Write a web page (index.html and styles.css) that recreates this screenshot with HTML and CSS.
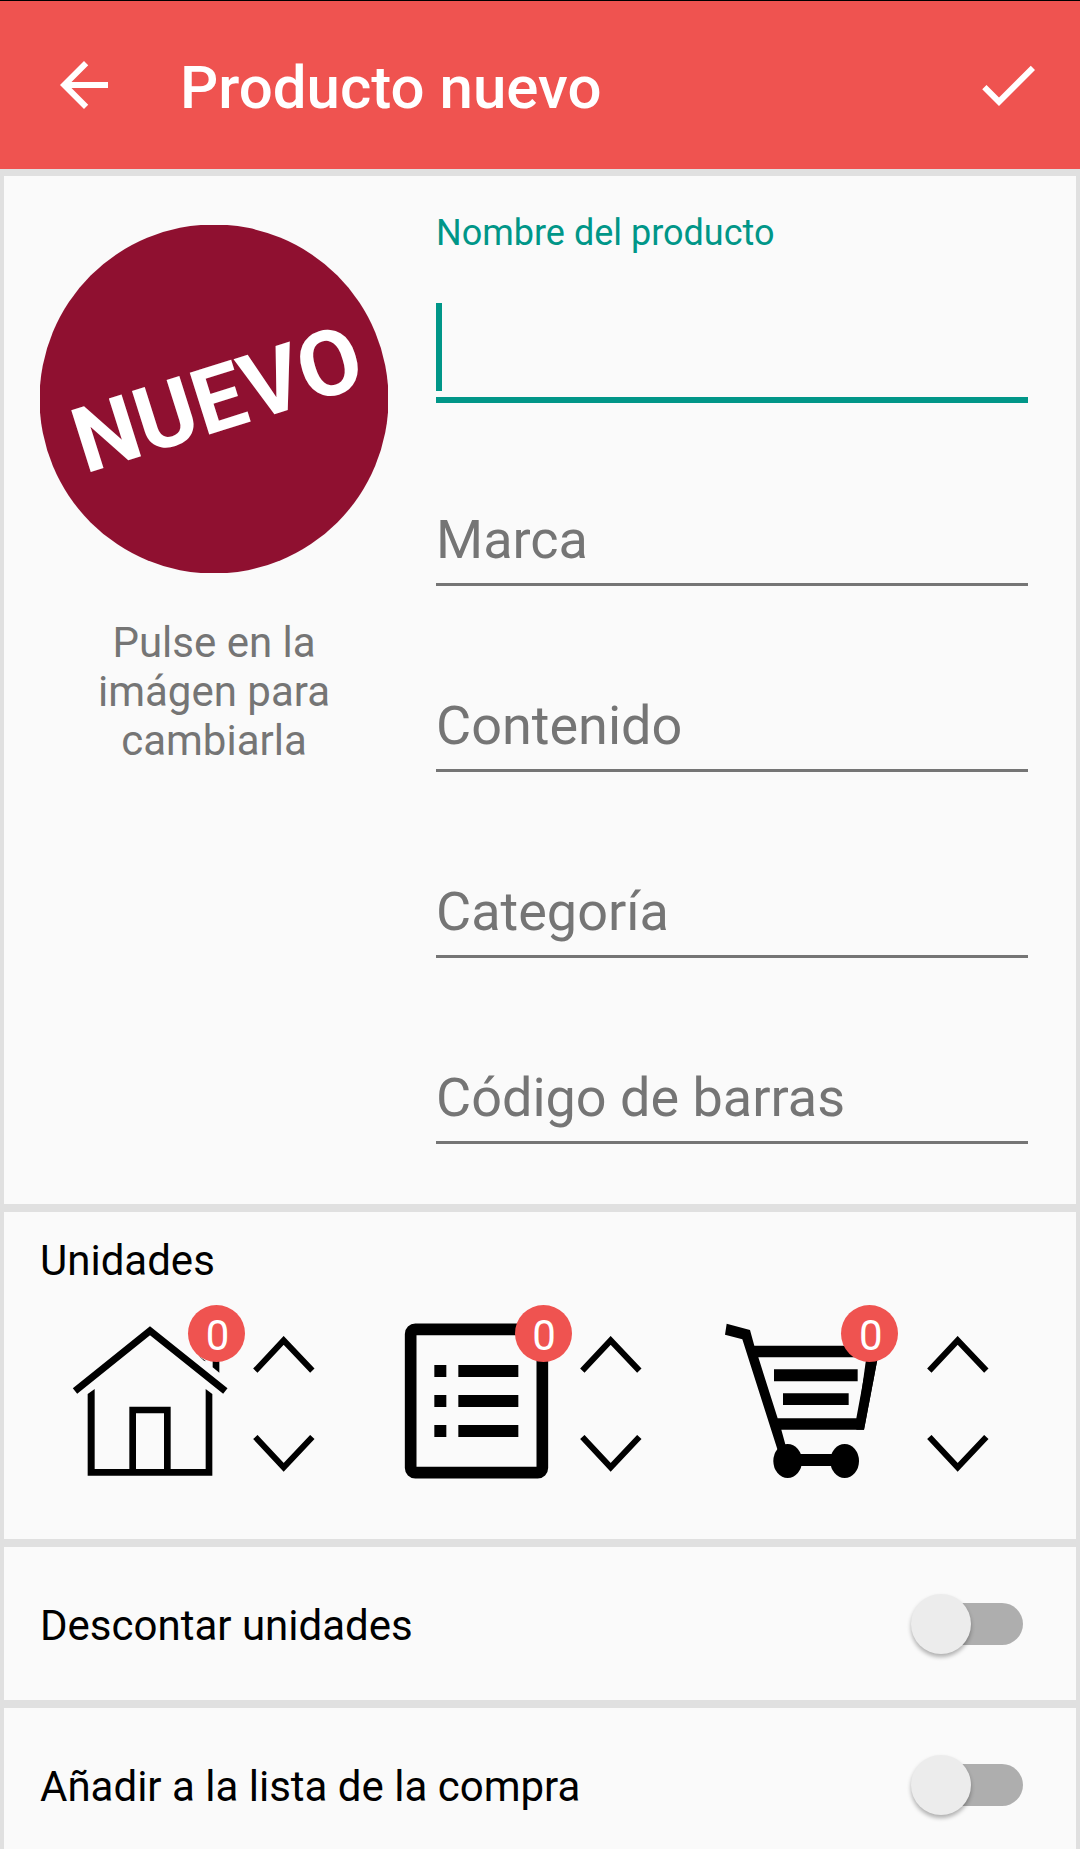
FILE: index.html
```html
<!DOCTYPE html>
<html lang="es">
<head>
<meta charset="utf-8">
<meta name="viewport" content="width=device-width, initial-scale=1">
<title>Producto nuevo</title>
<link rel="stylesheet" href="styles.css">
</head>
<body>
<form class="app">
  <header class="toolbar">
    <button class="icon-button" type="button" aria-label="Volver">
      <svg viewBox="0 0 24 24" aria-hidden="true"><path d="M20 11H7.83l5.59-5.59L12 4l-8 8 8 8 1.41-1.41L7.83 13H20v-2z"/></svg>
    </button>
    <h1 class="toolbar-title">Producto nuevo</h1>
    <button class="icon-button" type="submit" aria-label="Guardar">
      <svg viewBox="0 0 24 24" aria-hidden="true"><path d="M9 16.17L4.83 12l-1.42 1.41L9 19 21 7l-1.41-1.41z"/></svg>
    </button>
  </header>

  <main class="content">
    <section class="card details">
      <div class="photo">
        <button class="photo-button" type="button">
          <svg viewBox="0 0 348 348" aria-hidden="true">
            <circle cx="174" cy="174" r="174.5"/>
            <text class="photo-text" x="187" y="204" transform="rotate(-17.5 187 204)">NUEVO</text>
          </svg>
        </button>
        <p class="photo-hint">Pulse en la imágen para cambiarla</p>
      </div>
      <div class="fields">
        <div class="field field-active">
          <label class="field-label" for="nombre">Nombre del producto</label>
          <input class="field-input" id="nombre" type="text">
        </div>
        <div class="field"><input class="field-input" type="text" placeholder="Marca" aria-label="Marca"></div>
        <div class="field"><input class="field-input" type="text" placeholder="Contenido" aria-label="Contenido"></div>
        <div class="field"><input class="field-input" type="text" placeholder="Categoría" aria-label="Categoría"></div>
        <div class="field"><input class="field-input" type="text" placeholder="Código de barras" aria-label="Código de barras"></div>
      </div>
    </section>

    <section class="card units">
      <h2 class="units-title">Unidades</h2>
      <div class="units-row">
        <div class="unit">
          <div class="unit-icon">
            <svg viewBox="180 345 555 540" aria-hidden="true">
              <path d="M225 603L450 422L676 603" fill="none" stroke="#000" stroke-width="21"/>
              <path d="M263 612L284 597V837H388V650H512V837H617V597L637 612V857H263ZM408 670V837H492V670Z" fill-rule="evenodd"/>
              <path d="M638 500H658V548L638 532ZM594 496L618 514L612 512Z"/>
            </svg>
            <span class="badge">0</span>
          </div>
          <div class="stepper">
            <button class="step" type="button" aria-label="Aumentar en casa"><svg viewBox="758 438 186 111" aria-hidden="true"><path d="M765 542L850 451L936 542"/></svg></button>
            <button class="step" type="button" aria-label="Reducir en casa"><svg viewBox="758 735 186 111" aria-hidden="true"><path d="M765 741L850 832L936 741"/></svg></button>
          </div>
        </div>
        <div class="unit">
          <div class="unit-icon">
            <svg viewBox="110 345 555 540" aria-hidden="true">
              <rect x="181" y="418" width="395" height="430" rx="14" fill="none" stroke="#000" stroke-width="35"/>
              <path d="M252 525h36v36h-36zM324 525h180v36H324zM252 615h36v36h-36zM324 615h180v36H324zM252 705h36v36h-36zM324 705h180v36H324z"/>
            </svg>
            <span class="badge">0</span>
          </div>
          <div class="stepper">
            <button class="step" type="button" aria-label="Aumentar en la lista"><svg viewBox="758 438 186 111" aria-hidden="true"><path d="M765 542L850 451L936 542"/></svg></button>
            <button class="step" type="button" aria-label="Reducir en la lista"><svg viewBox="758 735 186 111" aria-hidden="true"><path d="M765 741L850 832L936 741"/></svg></button>
          </div>
        </div>
        <div class="unit unit-spaced">
          <div class="unit-icon">
            <svg viewBox="70 345 555 540" aria-hidden="true">
              <path d="M111 401L181 420L194 467H571L523 719H275L289 770L265 784L158 448L106 434ZM206 502L264 685H500L534 502Z" fill-rule="evenodd"/>
              <path d="M571 467L523 719H500L530 502Z"/>
              <path d="M253 538H504V574H253ZM280 610H477V645H280ZM320 792H440V828H320Z"/>
              <ellipse cx="294" cy="813" rx="43" ry="51"/>
              <ellipse cx="465" cy="813" rx="43" ry="51"/>
            </svg>
            <span class="badge">0</span>
          </div>
          <div class="stepper">
            <button class="step" type="button" aria-label="Aumentar en el carro"><svg viewBox="758 438 186 111" aria-hidden="true"><path d="M765 542L850 451L936 542"/></svg></button>
            <button class="step" type="button" aria-label="Reducir en el carro"><svg viewBox="758 735 186 111" aria-hidden="true"><path d="M765 741L850 832L936 741"/></svg></button>
          </div>
        </div>
      </div>
    </section>

    <section class="card option">
      <label class="option-label" for="descontar">Descontar unidades</label>
      <input class="switch" id="descontar" type="checkbox" role="switch">
    </section>

    <section class="card option">
      <label class="option-label" for="compra">Añadir a la lista de la compra</label>
      <input class="switch" id="compra" type="checkbox" role="switch">
    </section>
  </main>
</form>
</body>
</html>
```
FILE: styles.css
```css
* {
  box-sizing: border-box;
}

body {
  margin: 0;
  background: #e0e0e0;
  color: #000;
  font-family: Roboto, "Liberation Sans", sans-serif;
  font-size: 42px;
  line-height: 49px;
}

button,
input {
  margin: 0;
  padding: 0;
  border: 0;
  border-radius: 0;
  background: none;
  color: inherit;
  font: inherit;
}

button {
  cursor: pointer;
}

svg {
  display: block;
}

.app {
  display: flex;
  flex-direction: column;
  height: 100vh;
}

/* Toolbar */

.toolbar {
  display: flex;
  flex-shrink: 0;
  align-items: center;
  padding: 48px 36px 48px 48px;
  border-top: 1px solid #000;
  background: #ef5350;
  color: #fff;
}

.icon-button,
.icon-button svg {
  width: 72px;
  height: 72px;
  fill: currentColor;
}

.toolbar-title {
  flex: 1;
  margin: 0;
  padding: 6px 0 0 60px;
  font-size: 60px;
  font-weight: 500;
  line-height: 66px;
}

/* Cards */

.content {
  display: flex;
  flex: 1;
  flex-direction: column;
  gap: 8px;
  min-height: 0;
  padding: 7px 4px;
  overflow-y: auto;
  scrollbar-width: none;
}

.card {
  flex-shrink: 0;
  padding: 0 48px 0 36px;
  background: #fafafa;
}

/* Product details */

.details {
  display: grid;
  grid-template-columns: 348px 1fr;
  gap: 48px;
  padding-top: 41px;
  padding-bottom: 57px;
}

.photo {
  padding-top: 8px;
}

.photo-button {
  display: block;
  width: 100%;
}

.photo-button svg {
  width: 100%;
  fill: #8f1030;
}

.photo-button .photo-text {
  fill: #fff;
  font-size: 91px;
  font-weight: 700;
  text-anchor: middle;
}

.photo-hint {
  margin: 0;
  padding: 45px 48px 0;
  color: #757575;
  text-align: center;
}

.field {
  display: flex;
  flex-direction: column;
  justify-content: flex-end;
  height: 186px;
  padding-bottom: 3px;
}

.field-input {
  width: 100%;
  height: 78px;
  padding-bottom: 12px;
  border-bottom: 3px solid #757575;
  outline: 0;
  font-size: 54px;
  line-height: 64px;
}

.field-input::placeholder {
  color: #757575;
  opacity: 1;
}

.field-active {
  justify-content: space-between;
  padding-bottom: 0;
}

.field-label {
  color: #009688;
  font-size: 36px;
  line-height: 32px;
}

.field-active .field-input {
  height: 100px;
  border-bottom: 6px solid #009688;
  background: linear-gradient(#009688, #009688) no-repeat 0 0 / 6px 88px;
  caret-color: #009688;
}

/* Units */

.units {
  padding-top: 24px;
  padding-bottom: 36px;
}

.units-title {
  margin: 0 0 20px;
  font-size: 42px;
  font-weight: 400;
}

.units-row {
  display: grid;
  grid-template-columns: repeat(3, 1fr);
  margin: 0 -12px 0 20px;
}

.unit {
  display: flex;
  gap: 8px;
}

.unit-spaced {
  gap: 29px;
}

.unit-icon {
  position: relative;
  width: 185px;
}

.unit-icon svg {
  width: 185px;
  height: 180px;
}

.badge {
  position: absolute;
  top: 0;
  right: 0;
  width: 57px;
  height: 57px;
  padding-left: 2px;
  border-radius: 50%;
  background: #ef5350;
  color: #fff;
  line-height: 62px;
  text-align: center;
}

.step {
  display: flex;
  align-items: center;
  width: 62px;
  height: 99px;
}

.step svg {
  width: 62px;
  height: 37px;
  fill: none;
  stroke: #000;
  stroke-width: 18px;
}

/* Options */

.option {
  display: flex;
  align-items: center;
  justify-content: space-between;
  height: 153px;
  padding-right: 53px;
}

.option-label {
  padding-top: 4px;
}

.switch {
  position: relative;
  width: 107px;
  height: 42px;
  border-radius: 21px;
  appearance: none;
  background: #aeaeae;
  cursor: pointer;
}

.switch::before {
  position: absolute;
  top: -9px;
  left: -5px;
  width: 60px;
  height: 60px;
  border-radius: 50%;
  background: #ececec;
  box-shadow: 0 3px 4px rgba(0, 0, 0, 0.3);
  content: "";
}

.switch:checked {
  background: #80cbc4;
}

.switch:checked::before {
  left: 52px;
  background: #009688;
}
```
